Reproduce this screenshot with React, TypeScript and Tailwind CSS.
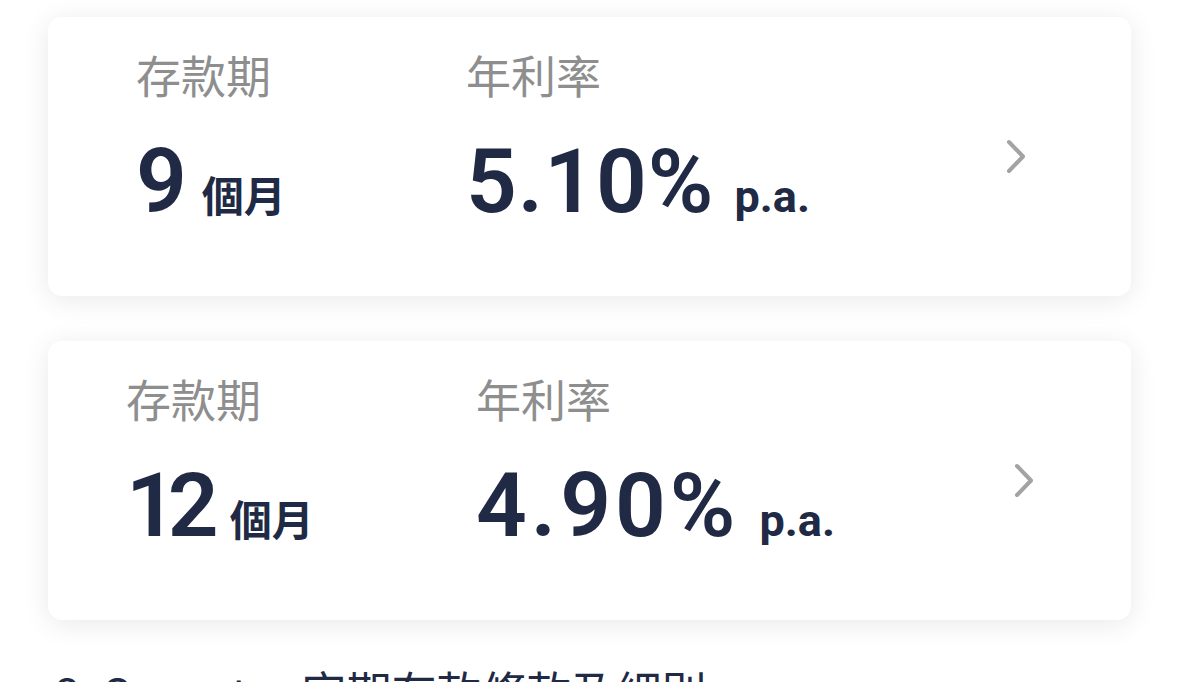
import React from 'react';

interface DepositCardProps {
  term: string;
  rate: string;
  padLeft: string;
  termWidth: string;
  termTracking: string;
  unitGap: string;
  rateTracking: string;
  padRight: string;
}

const Chevron: React.FC = () => (
  <svg width="22" height="37" viewBox="0 0 22 37" fill="none" className="self-center">
    <polyline
      points="4,4 18,18.5 4,33"
      stroke="#a3a3a3"
      strokeWidth="4"
      strokeLinecap="round"
      strokeLinejoin="round"
    />
  </svg>
);

const DepositCard: React.FC<DepositCardProps> = ({
  term,
  rate,
  padLeft,
  termWidth,
  termTracking,
  unitGap,
  rateTracking,
  padRight,
}) => {
  return (
    <div
      className={`h-[279px] bg-white rounded-[14px] shadow-[0_4px_28px_rgba(0,0,0,0.09)] flex justify-between ${padLeft} ${padRight}`}
    >
      <div className="flex pt-[35px]">
        {/* Term */}
        <div className={`flex flex-col ${termWidth}`}>
          <span className="text-[45px] leading-none text-[#8e8e8e] font-['Noto_Sans_CJK_TC',sans-serif]">
            存款期
          </span>
          <div className="mt-[40px] flex items-baseline text-[#212a45]">
            <span className={`text-[89px] leading-none font-semibold font-['Roboto',sans-serif] ${termTracking}`}>
              {term}
            </span>
            <span className={`${unitGap} text-[42px] leading-none font-bold font-['Noto_Sans_CJK_TC',sans-serif]`}>
              個月
            </span>
          </div>
        </div>

        {/* Rate */}
        <div className="flex flex-col">
          <span className="text-[45px] leading-none text-[#8e8e8e] font-['Noto_Sans_CJK_TC',sans-serif]">
            年利率
          </span>
          <div className="mt-[40px] flex items-baseline text-[#212a45]">
            <span className={`text-[89px] leading-none font-semibold font-['Roboto',sans-serif] ${rateTracking}`}>
              {rate}
            </span>
            <span className="ml-[20px] text-[45px] leading-none font-bold font-['Roboto',sans-serif]">p.a.</span>
          </div>
        </div>
      </div>

      <Chevron />
    </div>
  );
};

const App: React.FC = () => {
  return (
    <div className="min-h-screen bg-white px-[48px] pt-[17px] overflow-hidden">
      <div className="w-[1083px] flex flex-col gap-[45px]">
        <DepositCard
          term="9"
          rate="5.10%"
          padLeft="pl-[88px]"
          termWidth="w-[330px]"
          termTracking="tracking-[1px]"
          unitGap="ml-[14px]"
          rateTracking="tracking-[1px]"
          padRight="pr-[104px]"
        />
        <DepositCard
          term="12"
          rate="4.90%"
          padLeft="pl-[78px]"
          termWidth="w-[350px]"
          termTracking="tracking-[-9px]"
          unitGap="ml-[20px]"
          rateTracking="tracking-[4px]"
          padRight="pr-[96px]"
        />
      </div>

      <p className="mt-[44px] pl-[7px] text-[44px] leading-[1.2] text-[#212a45] whitespace-nowrap font-['Roboto',sans-serif]">
        3. Current
        <span className="ml-[55px] text-[45px] font-['Noto_Sans_CJK_TC',sans-serif]">定期存款條款及細則</span>
      </p>
    </div>
  );
};

export default App;
